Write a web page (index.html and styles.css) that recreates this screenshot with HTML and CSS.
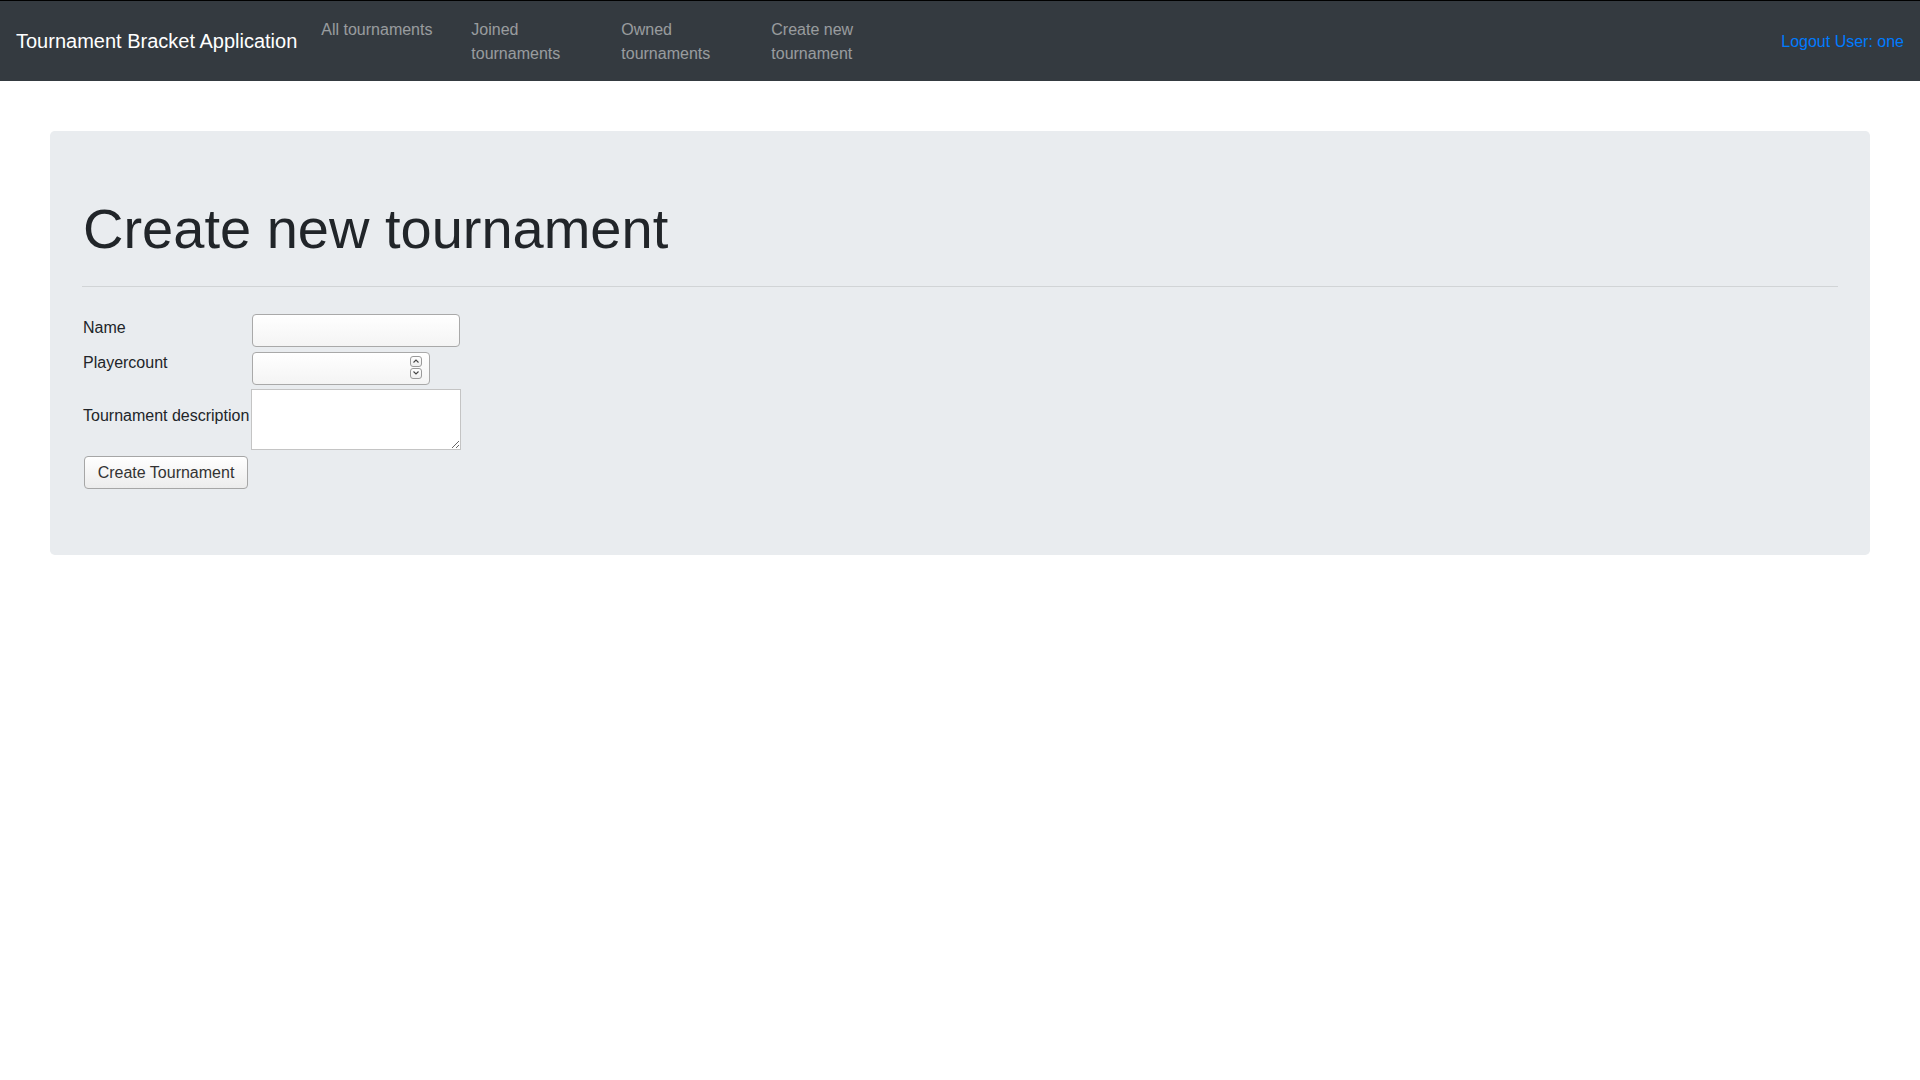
FILE: index.html
```html
<!DOCTYPE html>
<html lang="en">
<head>
<meta charset="utf-8">
<title>Create new tournament</title>
<link rel="stylesheet" href="styles.css">
</head>
<body>
<nav class="navbar">
  <a class="brand" href="#">Tournament Bracket Application</a>
  <ul class="nav">
    <li class="nav-item"><a class="nav-link" href="#">All tournaments</a></li>
    <li class="nav-item"><a class="nav-link" href="#">Joined tournaments</a></li>
    <li class="nav-item"><a class="nav-link" href="#">Owned tournaments</a></li>
    <li class="nav-item"><a class="nav-link" href="#">Create new tournament</a></li>
  </ul>
  <a class="logout" href="#">Logout User: one</a>
</nav>
<main class="page">
  <section class="jumbotron">
    <h1 class="display">Create new tournament</h1>
    <hr class="rule">
    <form class="form">
      <label class="label" for="name">Name</label>
      <input class="field text-field" id="name" type="text">
      <label class="label" for="count">Playercount</label>
      <div class="field number-field">
        <input class="number-input" id="count" type="text">
        <span class="spinner">
          <span class="spin-btn"><svg width="8" height="6" viewBox="0 0 8 6"><path d="M1.5 4.5 L4 2 L6.5 4.5" fill="none" stroke="#444" stroke-width="1.1"/></svg></span>
          <span class="spin-btn"><svg width="8" height="6" viewBox="0 0 8 6"><path d="M1.5 1.5 L4 4 L6.5 1.5" fill="none" stroke="#444" stroke-width="1.1"/></svg></span>
        </span>
      </div>
      <label class="label label-desc" for="desc">Tournament description</label>
      <textarea class="area" id="desc"></textarea>
      <button class="btn" type="button">Create Tournament</button>
    </form>
  </section>
</main>
</body>
</html>
```

FILE: styles.css
```css
* { box-sizing: border-box; }
html, body { margin: 0; padding: 0; }
body {
  font-family: "Liberation Sans", Arial, sans-serif;
  font-size: 16px;
  line-height: 1.5;
  color: #212529;
  background: #fff;
}
a { text-decoration: none; }

.navbar {
  display: flex;
  align-items: center;
  height: 81px;
  border-top: 1px solid #000;
  background: #343a40;
  padding: 0 16px;
}
.brand {
  color: #fff;
  font-size: 20px;
  line-height: 30px;
  margin-right: 16px;
  white-space: nowrap;
}
.nav {
  display: flex;
  list-style: none;
  margin: 0;
  padding: 0;
  align-self: flex-start;
  padding-top: 9px;
}
.nav-item { width: 150px; }
.nav-link {
  display: block;
  padding: 8px 8px;
  color: rgba(255, 255, 255, 0.5);
  line-height: 24px;
}
.logout {
  margin-left: auto;
  color: #007bff;
  line-height: 24px;
  padding-top: 2px;
}

.page { padding: 50px 50px 0; }
.jumbotron {
  background: #e9ecef;
  border-radius: 4.8px;
  padding: 64px 32px 66px;
}
.display {
  margin: 0 0 8px;
  font-size: 56px;
  font-weight: 300;
  line-height: 1.2;
  padding-left: 1px;
}
.rule {
  margin: 24px 0 0;
  border: 0;
  border-top: 1px solid rgba(0, 0, 0, 0.1);
}

.form {
  display: grid;
  grid-template-columns: max-content max-content;
  column-gap: 2px;
  align-items: center;
  justify-items: start;
  padding-top: 27px;
}
.label {
  padding-left: 1px;
  line-height: 24px;
  margin-top: -6px;
}
.label-desc { margin-top: -4px; }

.field {
  height: 33px;
  border: 1px solid #a9a9a9;
  border-radius: 4px;
  background: linear-gradient(to bottom, #ffffff, #f4f4f4);
  margin-left: 1px;
}
.text-field {
  width: 208px;
  font: inherit;
  padding: 0 6px;
  outline: none;
}
.number-field {
  width: 178px;
  display: flex;
  align-items: center;
  margin-top: 5px;
}
.number-input {
  flex: 1;
  min-width: 0;
  border: 0;
  background: transparent;
  font: inherit;
  padding: 0 6px;
  outline: none;
}
.spinner {
  display: flex;
  flex-direction: column;
  margin-right: 7px;
  margin-top: -2px;
}
.spin-btn {
  width: 12px;
  height: 11px;
  border: 1px solid #9a9a9a;
  border-radius: 3px;
  background: linear-gradient(to bottom, #fff, #eee);
  display: flex;
  align-items: center;
  justify-content: center;
  margin-bottom: 1px;
}
.area {
  width: 210px;
  height: 61px;
  border: 1px solid #c4c4c4;
  background: #fff;
  margin-top: 4px;
  font: inherit;
  resize: both;
  outline: none;
}
.btn {
  grid-column: 1 / 2;
  margin-top: 6px;
  margin-left: 2px;
  height: 33px;
  width: 164px;
  padding: 0;
  font: inherit;
  font-size: 16px;
  color: #333;
  border: 1px solid #a6a6a6;
  border-radius: 4px;
  background: linear-gradient(to bottom, #ffffff, #ececec);
}
```
